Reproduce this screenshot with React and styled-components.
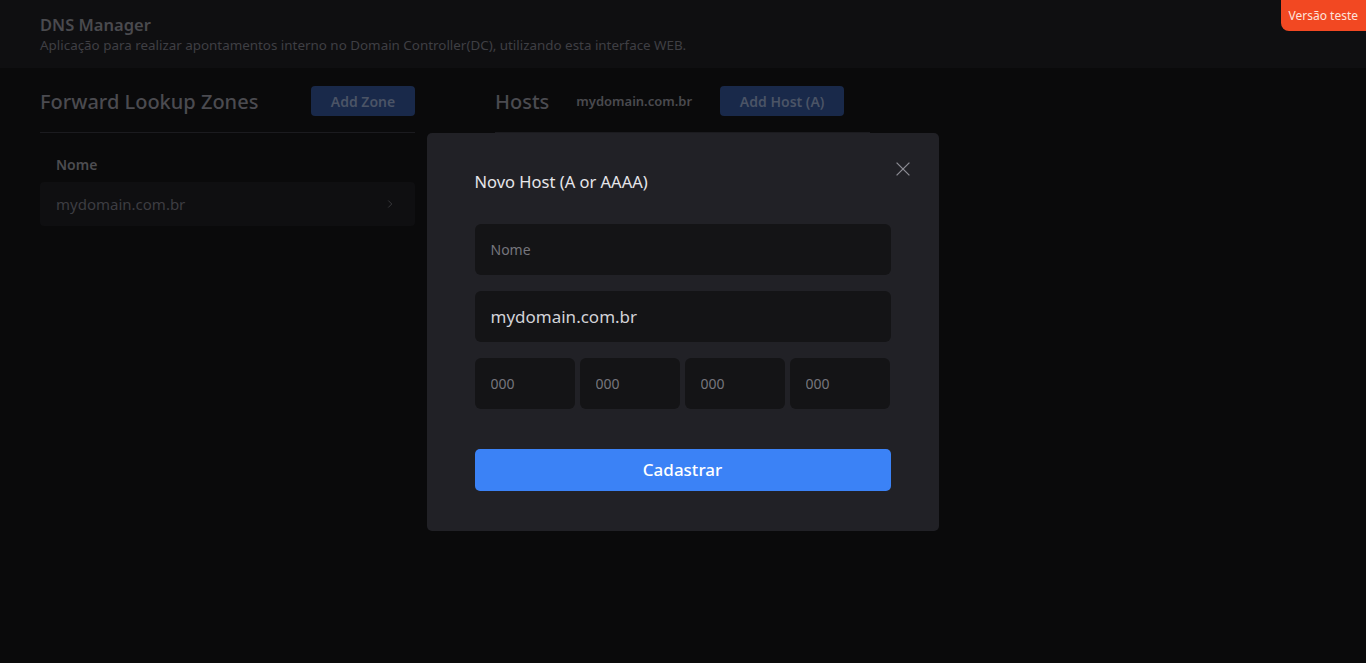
import React from "react";
import styled, { createGlobalStyle } from "styled-components";

const GlobalStyle = createGlobalStyle`
  * { box-sizing: border-box; }
  html, body {
    margin: 0;
    padding: 0;
    background: #0a0a0b;
    font-family: "Noto Sans", "Liberation Sans", sans-serif;
  }
`;

const App = () => {
  return (
    <>
      <GlobalStyle />
      <Page>
        <Header>
          <Title>DNS Manager</Title>
          <Subtitle>
            Aplicação para realizar apontamentos interno no Domain Controller(DC), utilizando esta interface WEB.
          </Subtitle>
        </Header>
        <Badge>Versão teste</Badge>
        <Content>
          <Column width="375px">
            <SectionHead>
              <SectionTitle>Forward Lookup Zones</SectionTitle>
              <DimButton>Add Zone</DimButton>
            </SectionHead>
            <Divider />
            <TableHead>Nome</TableHead>
            <ZoneRow>
              <span>mydomain.com.br</span>
              <Chevron viewBox="0 0 24 24">
                <path d="M9 6l6 6-6 6" />
              </Chevron>
            </ZoneRow>
          </Column>
          <Column width="375px">
            <SectionHead justify="flex-start">
              <SectionTitle>Hosts</SectionTitle>
              <ZoneName>mydomain.com.br</ZoneName>
              <DimButton wide>Add Host (A)</DimButton>
            </SectionHead>
            <Divider />
          </Column>
        </Content>
      </Page>

      <Overlay>
        <Modal>
          <ModalHead>
            <ModalTitle>Novo Host (A or AAAA)</ModalTitle>
            <CloseButton aria-label="Fechar">
              <svg viewBox="0 0 24 24" width="22" height="22">
                <path d="M5 5l14 14M19 5L5 19" />
              </svg>
            </CloseButton>
          </ModalHead>
          <Form>
            <Field placeholder="Nome" />
            <Field big defaultValue="mydomain.com.br" />
            <IpRow>
              <Field placeholder="000" />
              <Field placeholder="000" />
              <Field placeholder="000" />
              <Field placeholder="000" />
            </IpRow>
            <Submit>Cadastrar</Submit>
          </Form>
        </Modal>
      </Overlay>
    </>
  );
};

export default App;

const Page = styled.div`
  min-height: 663px;
  background: #0a0a0b;
`;

const Header = styled.header`
  height: 68px;
  background: #0f0f11;
  padding: 14px 40px 0;
`;

const Title = styled.h1`
  margin: 0;
  font-size: 16.5px;
  font-weight: 600;
  color: #4a4a4e;
  line-height: 22px;
`;

const Subtitle = styled.p`
  margin: 0;
  font-size: 13.4px;
  color: #3f3f44;
  line-height: 18px;
`;

const Badge = styled.div`
  position: fixed;
  top: 0;
  right: 0;
  z-index: 20;
  height: 31px;
  padding: 0 8px;
  display: flex;
  align-items: center;
  background: #f24822;
  color: #fde4dc;
  font-size: 12px;
  border-bottom-left-radius: 8px;
`;

const Content = styled.main`
  display: flex;
  gap: 80px;
  padding: 18px 40px;
`;

const Column = styled.section`
  width: ${(p) => p.width};
`;

const SectionHead = styled.div`
  display: flex;
  align-items: center;
  justify-content: ${(p) => p.justify || "space-between"};
  gap: 28px;
  height: 30px;
`;

const SectionTitle = styled.h2`
  margin: 0;
  font-size: 20px;
  font-weight: 500;
  color: #4b4b50;
`;

const ZoneName = styled.span`
  font-size: 13px;
  font-weight: 600;
  color: #4a4a4f;
  margin-left: -1px;
`;

const DimButton = styled.button`
  width: ${(p) => (p.wide ? "124px" : "104px")};
  height: 30px;
  border: none;
  border-radius: 4px;
  background: #19294a;
  color: #4b5466;
  font-family: inherit;
  font-size: 14px;
  font-weight: 600;
`;

const Divider = styled.hr`
  margin: 16px 0 0;
  border: none;
  border-top: 1px solid #1b1b1f;
`;

const TableHead = styled.div`
  padding: 22px 16px 8px;
  font-size: 14px;
  font-weight: 600;
  color: #4d4d51;
`;

const ZoneRow = styled.div`
  height: 44px;
  display: flex;
  align-items: center;
  justify-content: space-between;
  padding: 0 18px 0 16px;
  background: #0f0f11;
  border-radius: 4px;
  font-size: 15px;
  color: #3d3d42;
`;

const Chevron = styled.svg`
  width: 14px;
  height: 14px;
  fill: none;
  stroke: #3a3a3e;
  stroke-width: 1.6;
`;

const Overlay = styled.div`
  position: fixed;
  inset: 0;
  z-index: 10;
  display: flex;
  justify-content: center;
  align-items: flex-start;
  padding-top: 133px;
`;

const Modal = styled.div`
  width: 512px;
  height: 398px;
  margin-left: -1px;
  background: #212126;
  border-radius: 5px;
  padding: 24px 48px 0;
`;

const ModalHead = styled.div`
  display: flex;
  justify-content: space-between;
  align-items: flex-start;
  height: 67px;
`;

const ModalTitle = styled.h3`
  margin: 13px 0 0;
  font-size: 16.5px;
  font-weight: 400;
  color: #e6e6ea;
`;

const CloseButton = styled.button`
  width: 24px;
  height: 24px;
  padding: 0;
  margin-right: -24px;
  background: none;
  border: none;
  display: flex;
  align-items: center;
  justify-content: center;

  svg {
    fill: none;
    stroke: #8c8c93;
    stroke-width: 1.4;
  }
`;

const Form = styled.div`
  display: flex;
  flex-direction: column;
  gap: 16px;
`;

const Field = styled.input`
  width: 100%;
  min-width: 0;
  height: 51px;
  border: none;
  outline: none;
  border-radius: 6px;
  background: #141416;
  padding: 0 16px;
  font-family: inherit;
  font-size: ${(p) => (p.big ? "17px" : "14px")};
  color: #d2d2d8;

  &::placeholder {
    color: #76767d;
  }
`;

const IpRow = styled.div`
  display: grid;
  grid-template-columns: repeat(4, 100px);
  gap: 5px;
`;

const Submit = styled.button`
  margin-top: 24px;
  height: 42px;
  border: none;
  border-radius: 5px;
  background: #3b82f6;
  color: #ffffff;
  font-family: inherit;
  font-size: 17px;
  font-weight: 500;
  padding-bottom: 3px;
`;
